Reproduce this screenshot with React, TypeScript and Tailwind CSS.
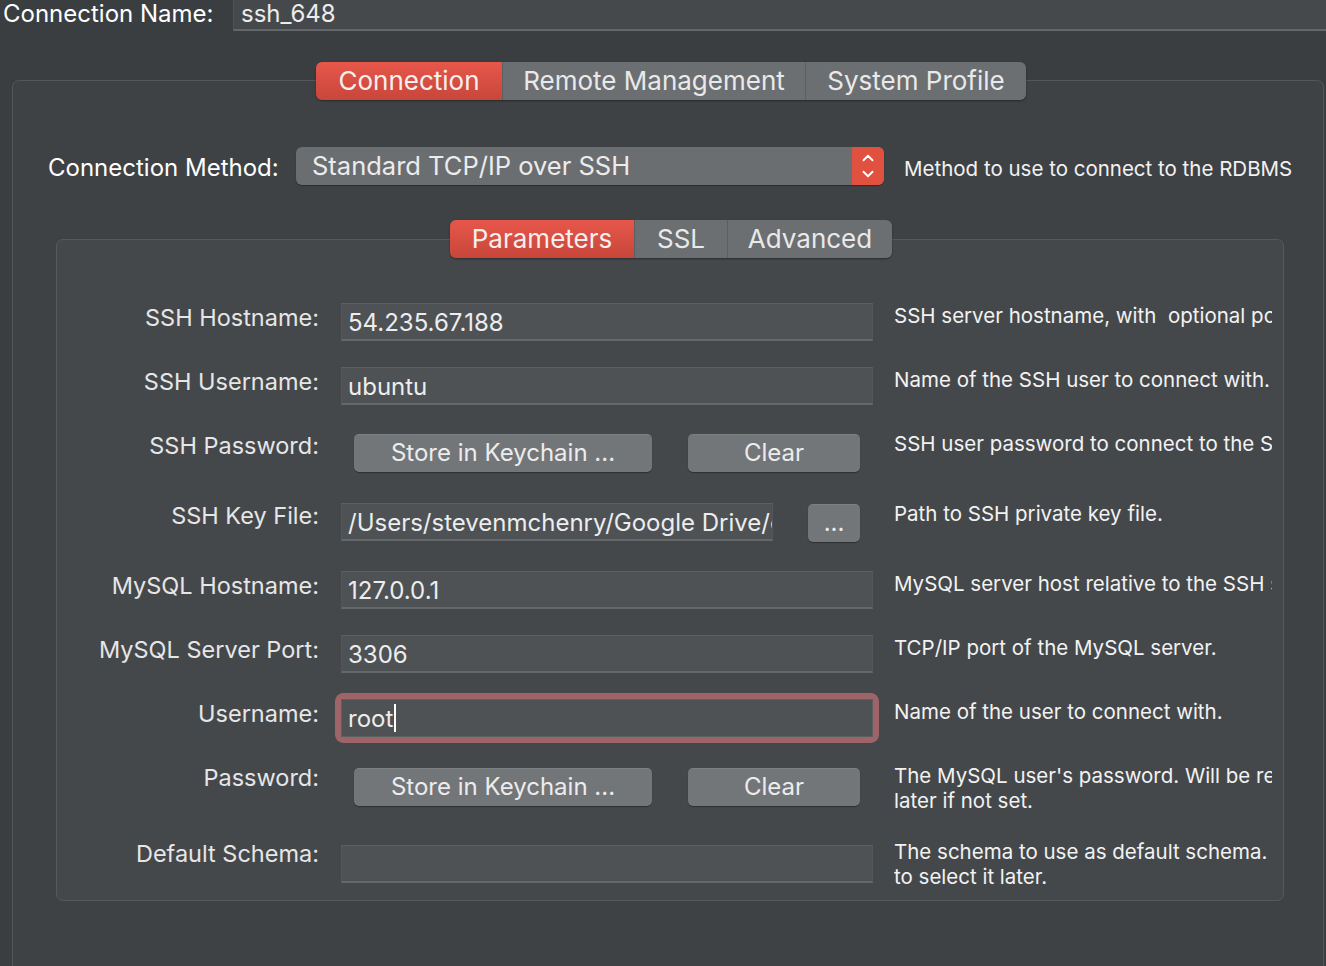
import { ChevronUp, ChevronDown } from "lucide-react";

function Field({ value, width = "w-[532px]" }: { value?: string; width?: string }) {
  return (
    <div
      className={`${width} h-[38px] bg-[#4e5255] border-t border-t-[#5b5f62] border-b-2 border-b-[#64686b] border-x border-x-[#53575a] pl-[6px] text-[24px] leading-[37px] text-[#ededed] whitespace-nowrap overflow-hidden`}
    >
      {value}
    </div>
  );
}

function Button({ label, width }: { label: string; width: string }) {
  return (
    <div
      className={`${width} h-[38px] rounded-[5px] bg-[#737679] shadow-[0_1px_1px_rgba(0,0,0,0.35)] border-t border-t-[#7d8083] text-center text-[24px] leading-[36px] text-[#ececec]`}
    >
      {label}
    </div>
  );
}

function Label({ text }: { text: string }) {
  return (
    <div className="w-[262px] mt-[1px] text-right text-[23.5px] leading-[28px] text-[#e6e6e6] whitespace-nowrap">
      {text}
    </div>
  );
}

function Desc({ lines }: { lines: string[] }) {
  return (
    <div className="ml-[21px] w-[378px] overflow-hidden text-[20.5px] leading-[25px] text-[#f2f2f2]">
      {lines.map((l) => (
        <div key={l} className="whitespace-pre">
          {l}
        </div>
      ))}
    </div>
  );
}

export default function App() {
  return (
    <div className="h-[966px] w-[1326px] overflow-hidden bg-[#3b3e41] text-[#e8e8e8] font-['Inter','Liberation_Sans',sans-serif]">
      {/* connection name */}
      <div className="flex h-[31px]">
        <div className="w-[233px] pl-[3px] text-[24px] leading-[28px] text-white">Connection Name:</div>
        <div className="flex-1 bg-[#45494c] border-l border-l-[#4f5356] border-b-2 border-b-[#64676a] pl-[7px] text-[24px] leading-[28px] text-[#ececec]">
          ssh_648
        </div>
      </div>

      {/* top tabs */}
      <div className="relative z-10 mt-[31px] ml-[316px] flex h-[38px] w-[710px] rounded-[6px] overflow-hidden shadow-[0_1px_2px_rgba(0,0,0,0.4)] text-[26px] leading-[38px]">
        <div className="w-[186px] bg-gradient-to-b from-[#e7574a] to-[#c8463b] text-center text-[#f6efee]">
          Connection
        </div>
        <div className="w-[303px] bg-[#6c6f72] border-l border-[#5c5f62] text-center text-[#e9e9e9]">
          Remote Management
        </div>
        <div className="w-[221px] bg-[#6c6f72] border-l border-[#5c5f62] text-center text-[#e9e9e9]">
          System Profile
        </div>
      </div>

      {/* outer panel */}
      <div className="-mt-[20px] ml-[12px] w-[1312px] h-[1000px] rounded-[7px] border border-[#54575a] bg-[#3f4245]">
        <div className="mt-[66px] flex h-[38px] items-center">
          <div className="w-[283px] pl-[35px] pt-[4px] text-[24px] leading-[28px] text-white">Connection Method:</div>
          <div className="flex h-[38px] w-[588px] rounded-[6px] overflow-hidden bg-[#6b6e71] shadow-[0_1px_1px_rgba(0,0,0,0.35)]">
            <div className="flex-1 pl-[16px] text-[25.5px] leading-[38px] text-[#ececec]">
              Standard TCP/IP over SSH
            </div>
            <div className="flex w-[32px] flex-col items-center justify-center bg-[#e1513f] text-white">
              <ChevronUp size={18} strokeWidth={2.5} className="-mb-[1px]" />
              <ChevronDown size={18} strokeWidth={2.5} className="-mt-[1px]" />
            </div>
          </div>
          <div className="ml-[20px] pt-[4px] text-[20.5px] leading-[25px] text-[#f2f2f2]">
            Method to use to connect to the RDBMS
          </div>
        </div>

        {/* inner tabs */}
        <div className="relative z-10 mt-[35px] ml-[437px] flex h-[38px] w-[442px] rounded-[6px] overflow-hidden shadow-[0_1px_2px_rgba(0,0,0,0.4)] text-[26px] leading-[38px]">
          <div className="w-[184px] bg-gradient-to-b from-[#e7574a] to-[#c8463b] text-center text-[#f6efee]">
            Parameters
          </div>
          <div className="w-[93px] bg-[#6c6f72] border-l border-[#5c5f62] text-center text-[#e9e9e9]">SSL</div>
          <div className="w-[165px] bg-[#6c6f72] border-l border-[#5c5f62] text-center text-[#e9e9e9]">
            Advanced
          </div>
        </div>

        {/* inner panel */}
        <div className="-mt-[19px] ml-[43px] w-[1228px] h-[662px] rounded-[7px] border border-[#56595c] bg-[#45484b] pt-[63px]">
          <div className="flex h-[64px] items-start">
            <Label text="SSH Hostname:" />
            <div className="ml-[22px] w-[532px]">
              <Field value="54.235.67.188" />
            </div>
            <Desc lines={["SSH server hostname, with  optional port"]} />
          </div>

          <div className="flex h-[64px] items-start">
            <Label text="SSH Username:" />
            <div className="ml-[22px] w-[532px]">
              <Field value="ubuntu" />
            </div>
            <Desc lines={["Name of the SSH user to connect with."]} />
          </div>

          <div className="flex h-[70px] items-start">
            <Label text="SSH Password:" />
            <div className="ml-[22px] mt-[3px] flex w-[532px]">
              <div className="ml-[13px]">
                <Button label="Store in Keychain ..." width="w-[298px]" />
              </div>
              <div className="ml-[36px]">
                <Button label="Clear" width="w-[172px]" />
              </div>
            </div>
            <Desc lines={["SSH user password to connect to the SSH tunnel."]} />
          </div>

          <div className="flex h-[70px] items-start">
            <Label text="SSH Key File:" />
            <div className="ml-[22px] mt-[2px] flex w-[532px]">
              <Field value="/Users/stevenmchenry/Google Drive/c" width="w-[432px]" />
              <div className="ml-[35px] mt-[1px]">
                <Button label="..." width="w-[52px]" />
              </div>
            </div>
            <Desc lines={["Path to SSH private key file."]} />
          </div>

          <div className="flex h-[64px] items-start">
            <Label text="MySQL Hostname:" />
            <div className="ml-[22px] w-[532px]">
              <Field value="127.0.0.1" />
            </div>
            <Desc lines={["MySQL server host relative to the SSH server."]} />
          </div>

          <div className="flex h-[64px] items-start">
            <Label text="MySQL Server Port:" />
            <div className="ml-[22px] w-[532px]">
              <Field value="3306" />
            </div>
            <Desc lines={["TCP/IP port of the MySQL server."]} />
          </div>

          <div className="flex h-[64px] items-start">
            <Label text="Username:" />
            <div className="ml-[22px] w-[532px] rounded-[3px] shadow-[0_0_0_6px_#9d6567]">
              <div className="flex h-[38px] items-center bg-[#4e5255] border border-[#5b5f62] pl-[6px] text-[24px] leading-[35px] text-[#ededed]">
                root
                <span className="ml-[1px] h-[28px] w-[2px] bg-white" />
              </div>
            </div>
            <Desc lines={["Name of the user to connect with."]} />
          </div>

          <div className="flex h-[76px] items-start">
            <Label text="Password:" />
            <div className="ml-[22px] mt-[5px] flex w-[532px]">
              <div className="ml-[13px]">
                <Button label="Store in Keychain ..." width="w-[298px]" />
              </div>
              <div className="ml-[36px]">
                <Button label="Clear" width="w-[172px]" />
              </div>
            </div>
            <Desc lines={["The MySQL user's password. Will be requested", "later if not set."]} />
          </div>

          <div className="flex h-[64px] items-start">
            <Label text="Default Schema:" />
            <div className="ml-[22px] mt-[6px] w-[532px]">
              <Field />
            </div>
            <Desc lines={["The schema to use as default schema. Leave blank", "to select it later."]} />
          </div>
        </div>
      </div>
    </div>
  );
}
